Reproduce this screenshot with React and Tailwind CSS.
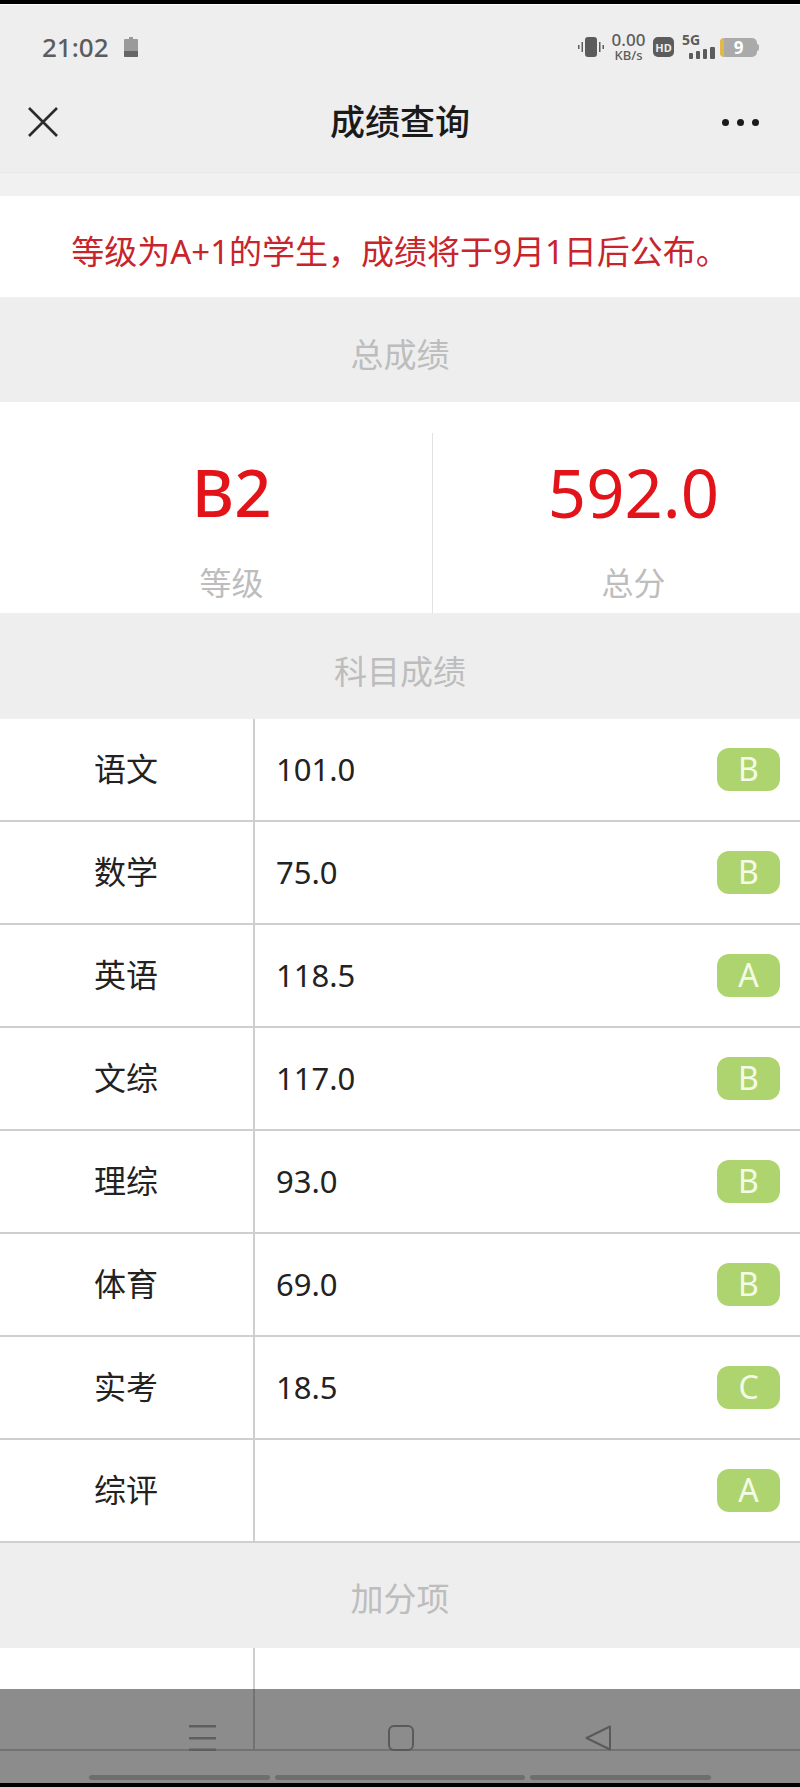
import React from 'react';

const subjects = [
  { name: '语文', score: '101.0', level: 'B' },
  { name: '数学', score: '75.0', level: 'B' },
  { name: '英语', score: '118.5', level: 'A' },
  { name: '文综', score: '117.0', level: 'B' },
  { name: '理综', score: '93.0', level: 'B' },
  { name: '体育', score: '69.0', level: 'B' },
  { name: '实考', score: '18.5', level: 'C' },
  { name: '综评', score: '', level: 'A' },
];

function SectionTitle({ children, className }) {
  return (
    <div className={`flex items-center justify-center bg-[#eeeeee] text-[33px] text-[#bdbdbd] ${className}`}>
      {children}
    </div>
  );
}

function SubjectRow({ name, score, level }) {
  return (
    <div className="flex h-[103px] border-b-2 border-[#cfcfcf]">
      <div className="flex w-[255px] items-center justify-center border-r-2 border-[#cfcfcf] pb-[2px] pr-[1px] text-[32px] text-[#222222]">
        {name}
      </div>
      <div className="flex flex-1 items-center justify-between pl-[21px] pr-[20px]">
        <span className="text-[31px] text-[#222222]">{score}</span>
        <span className="flex h-[43px] w-[63px] items-center justify-center rounded-[12px] bg-[#aed470] pb-[1px] text-[32px] text-[#f4fbe6]">
          {level}
        </span>
      </div>
    </div>
  );
}

function StatusBar() {
  return (
    <div className="flex h-[84px] items-center justify-between pl-[42px] pr-[41px] text-[#5c5c5c]">
      <div className="flex items-center gap-[15px]">
        <span className="text-[26px] font-medium leading-none">21:02</span>
        <svg width="14" height="20" viewBox="0 0 14 20">
          <path d="M5 0h4v2h4a1 1 0 0 1 1 1v16a1 1 0 0 1-1 1H1a1 1 0 0 1-1-1V3a1 1 0 0 1 1-1h4z" fill="#9a9a9a" />
          <path d="M0 14h14v5a1 1 0 0 1-1 1H1a1 1 0 0 1-1-1z" fill="#666666" />
        </svg>
      </div>
      <div className="flex items-center">
        <svg width="26" height="20" viewBox="0 0 26 20" fill="#5c5c5c">
          <rect x="7" y="0" width="12" height="20" rx="3" />
          <rect x="0" y="8" width="1.5" height="4" />
          <rect x="3.5" y="5" width="1.5" height="10" />
          <rect x="21" y="5" width="1.5" height="10" />
          <rect x="24.5" y="8" width="1.5" height="4" />
        </svg>
        <div className="ml-[7px] flex w-[35px] flex-col items-center font-medium">
          <span className="text-[17px] leading-[16px]">0.00</span>
          <span className="text-[13px] leading-[14px]">KB/s</span>
        </div>
        <span className="ml-[7px] flex h-[20px] w-[21px] items-center justify-center rounded-[5px] bg-[#5c5c5c] text-[11px] font-bold leading-none text-[#ededed]">
          HD
        </span>
        <div className="relative ml-[8px] h-[26px] w-[33px]">
          <span className="absolute left-0 top-[-1px] text-[14px] font-bold leading-[14px]">5G</span>
          <svg className="absolute bottom-[1px] left-[7px]" width="26" height="12" viewBox="0 0 26 12" fill="#5c5c5c">
            <rect x="0" y="6" width="4" height="6" rx="1" />
            <rect x="7" y="4" width="4" height="8" rx="1" />
            <rect x="14" y="2" width="4" height="10" rx="1" />
            <rect x="21" y="0" width="5" height="12" rx="1" />
          </svg>
        </div>
        <div className="relative ml-[5px] flex h-[19px] w-[37px] items-center justify-center rounded-[5px] bg-[#aaaaaa] text-[17px] font-bold leading-none text-white">
          <span className="absolute bottom-0 left-0 top-0 w-[4px] rounded-l-[5px] bg-[#e3b84a]" />
          9
        </div>
        <span className="h-[7px] w-[2px] rounded-r-sm bg-[#aaaaaa]" />
      </div>
    </div>
  );
}

function NavBar() {
  return (
    <div className="grid h-[66px] grid-cols-[1fr_auto_1fr] items-center pl-[28px] pr-[41px]">
      <svg width="30" height="30" viewBox="0 0 30 30" stroke="#2b2b2b" strokeWidth="2.6">
        <path d="M1 1l28 28M29 1L1 29" />
      </svg>
      <span className="ml-[13px] text-[35px] font-medium text-[#1a1a1a]">成绩查询</span>
      <div className="flex justify-end gap-[8px]">
        <span className="size-[7px] rounded-full bg-[#1a1a1a]" />
        <span className="size-[7px] rounded-full bg-[#1a1a1a]" />
        <span className="size-[7px] rounded-full bg-[#1a1a1a]" />
      </div>
    </div>
  );
}

function BottomNav() {
  return (
    <div className="absolute inset-x-0 bottom-0 h-[98px] bg-black/45">
      <div className="flex justify-center pt-[36px]">
        <div className="flex w-[422px] items-center justify-between">
          <svg width="27" height="26" viewBox="0 0 27 26" fill="#5f5f5f">
            <rect y="0" width="27" height="2.5" />
            <rect y="12" width="27" height="2.5" />
            <rect y="23.5" width="27" height="2.5" />
          </svg>
          <svg width="26" height="26" viewBox="0 0 26 26" fill="none" stroke="#5a5a5a" strokeWidth="2">
            <rect x="1" y="1" width="24" height="24" rx="5" />
          </svg>
          <svg width="26" height="26" viewBox="0 0 26 26" fill="none" stroke="#5a5a5a" strokeWidth="2" strokeLinejoin="round">
            <path d="M25 1.5v23L1.5 13z" />
          </svg>
        </div>
      </div>
      <div className="mt-[24px] flex justify-center gap-[5px]">
        <span className="h-[5px] w-[181px] rounded-sm bg-[#6e6e6e]" />
        <span className="h-[5px] w-[250px] rounded-sm bg-[#6e6e6e]" />
        <span className="h-[5px] w-[181px] rounded-sm bg-[#6e6e6e]" />
      </div>
      <div className="absolute inset-x-0 bottom-0 h-[4px] bg-black" />
    </div>
  );
}

export default function App() {
  return (
    <div
      className="relative h-[1787px] w-[800px] overflow-hidden bg-white"
      style={{ fontFamily: '"Noto Sans", "Noto Sans CJK SC", sans-serif' }}
    >
      <div className="h-[4px] bg-black" />
      <div className="h-[1px] bg-white" />
      <div className="bg-[#eeeeee]">
        <StatusBar />
        <NavBar />
        <div className="h-[17px]" />
      </div>
      <div className="h-[24px] border-t border-[#e9e9e9] bg-[#f1f1f1]" />

      <div className="flex h-[101px] items-center justify-center pt-[10px] text-[33px] text-[#c8242b]">
        等级为A+1的学生，成绩将于9月1日后公布。
      </div>

      <SectionTitle className="h-[105px] pt-[11px]">总成绩</SectionTitle>

      <div className="flex h-[211px] pt-[31px]">
        <div className="flex w-[433px] flex-col items-center border-r border-[#e2e2e2] pl-[31px]">
          <span className="mt-[14px] text-[65px] font-medium leading-[90px] text-[#e2141a]">B2</span>
          <span className="mt-[22px] text-[32px] leading-[48px] text-[#bdbdbd]">等级</span>
        </div>
        <div className="flex flex-1 flex-col items-center pl-[34px]">
          <span className="mt-[14px] text-[67px] leading-[90px] text-[#e2141a]">592.0</span>
          <span className="mt-[22px] text-[32px] leading-[48px] text-[#bdbdbd]">总分</span>
        </div>
      </div>

      <SectionTitle className="h-[106px] pt-[11px]">科目成绩</SectionTitle>

      {subjects.map((s) => (
        <SubjectRow key={s.name} {...s} />
      ))}

      <SectionTitle className="h-[105px] pt-[7px]">加分项</SectionTitle>

      <div className="h-[103px] border-b-2 border-[#cfcfcf]">
        <div className="h-full w-[255px] border-r-2 border-[#cfcfcf]" />
      </div>

      <BottomNav />
    </div>
  );
}
